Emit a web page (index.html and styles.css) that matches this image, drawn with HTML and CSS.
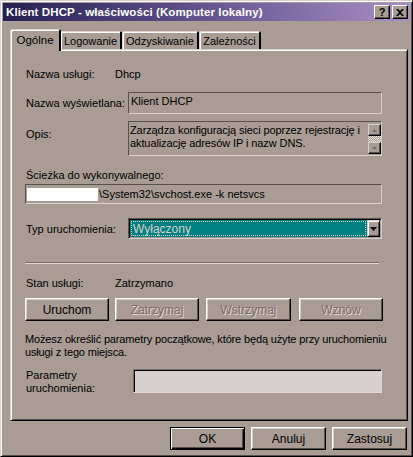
FILE: index.html
```html
<!DOCTYPE html>
<html lang="pl">
<head>
<meta charset="utf-8">
<title>Klient DHCP - właściwości</title>
<link rel="stylesheet" href="styles.css">
</head>
<body>
<div class="window">
  <div class="titlebar">
    <span class="title">Klient DHCP - właściwości (Komputer lokalny)</span>
    <div class="tbtns">
      <span class="tbtn">?</span>
      <span class="tbtn tbtn-x"><svg width="8" height="7" viewBox="0 0 8 7"><path d="M0 0h2l2 2 2-2h2L5 3.5 8 7H6L4 5 2 7H0l3-3.5z" fill="#000"/></svg></span>
    </div>
  </div>
  <div class="tabs">
    <div class="tab active">Ogólne</div>
    <div class="tab t2">Logowanie</div>
    <div class="tab t3">Odzyskiwanie</div>
    <div class="tab t4">Zależności</div>
  </div>
  <div class="panel">
    <div class="row r1">
      <span class="lbl lbl-short">Nazwa usługi:</span>
      <span>Dhcp</span>
    </div>
    <div class="row r2">
      <span class="lbl">Nazwa wyświetlana:</span>
      <div class="field ro f-name">Klient DHCP</div>
    </div>
    <div class="row r3">
      <span class="lbl lbl-top">Opis:</span>
      <div class="field ro f-desc">
        <div class="desc-text">Zarządza konfiguracją sieci poprzez rejestrację i aktualizację adresów IP i nazw DNS.</div>
        <div class="vscroll">
          <span class="sbtn"><svg width="5" height="3" viewBox="0 0 5 3"><path d="M2.5 0L5 3H0z" fill="#7a6e68"/></svg></span>
          <span class="strack"></span>
          <span class="sbtn"><svg width="5" height="3" viewBox="0 0 5 3"><path d="M0 0h5L2.5 3z" fill="#7a6e68"/></svg></span>
        </div>
      </div>
    </div>
    <div class="r4">Ścieżka do wykonywalnego:</div>
    <div class="field ro f-path"><span class="redact"></span>\System32\svchost.exe -k netsvcs</div>
    <div class="row r6">
      <span class="lbl">Typ uruchomienia:</span>
      <div class="combo">
        <div class="combo-val"><span class="sel">Wyłączony</span></div>
        <span class="cbtn"><svg width="7" height="4" viewBox="0 0 7 4"><path d="M0 0h7L3.5 4z" fill="#000"/></svg></span>
      </div>
    </div>
    <div class="sep"></div>
    <div class="row r7">
      <span class="lbl lbl-short">Stan usługi:</span>
      <span>Zatrzymano</span>
    </div>
    <div class="btnrow">
      <span class="btn">Uruchom</span>
      <span class="btn dis">Zatrzymaj</span>
      <span class="btn dis">Wstrzymaj</span>
      <span class="btn dis">Wznów</span>
    </div>
    <p class="info">Możesz określić parametry początkowe, które będą użyte przy uruchomieniu<br>usługi z tego miejsca.</p>
    <div class="row r9">
      <span class="lbl lbl-param">Parametry<br>uruchomienia:</span>
      <div class="field f-param"></div>
    </div>
  </div>
  <div class="footer">
    <span class="btn fbtn default">OK</span>
    <span class="btn fbtn">Anuluj</span>
    <span class="btn fbtn">Zastosuj</span>
  </div>
</div>
</body>
</html>
```

FILE: styles.css
```css
* { box-sizing: border-box; }
html, body { margin: 0; padding: 0; }
body {
  width: 413px;
  height: 457px;
  overflow: hidden;
  background: #a89c94;
  font-family: "Liberation Sans", Arial, sans-serif;
  font-size: 11px;
  color: #000;
}
.window {
  width: 413px;
  height: 457px;
  background: #a89c94;
  border-left: 1px solid #d8d0cc;
  border-top: 1px solid #d8d0cc;
  border-right: 1px solid #000;
  border-bottom: 1px solid #000;
  box-shadow: inset 1px 1px 0 #fff, inset -1px -1px 0 #58504c;
  padding: 2px 2px 0 2px;
  position: relative;
}
.titlebar {
  height: 18px;
  background: linear-gradient(to right, #262052 0%, #6a5a96 55%, #a890c4 100%);
  display: flex;
  align-items: center;
  justify-content: space-between;
  padding: 0 2px 0 3px;
}
.title {
  color: #fff;
  font-weight: bold;
  font-size: 11.5px;
  letter-spacing: 0.1px;
  white-space: nowrap;
}
.tbtns { display: flex; gap: 2px; }
.tbtn {
  width: 16px;
  height: 14px;
  background: #a89c94;
  border-top: 1px solid #fff;
  border-left: 1px solid #fff;
  border-right: 1px solid #000;
  border-bottom: 1px solid #000;
  box-shadow: inset -1px -1px 0 #58504c;
  display: flex;
  align-items: center;
  justify-content: center;
  font-weight: bold;
  font-size: 11px;
  line-height: 1;
}
.tabs {
  display: flex;
  margin: 7px 0 0 7px;
  height: 21px;
  align-items: flex-end;
  position: relative;
  z-index: 1;
}
.tab {
  height: 18px;
  border-top: 1px solid #d8d0cc;
  border-left: 1px solid #d8d0cc;
  border-right: 2px solid #000;
  border-radius: 2px 2px 0 0;
  display: flex;
  align-items: center;
  justify-content: center;
  box-shadow: inset 1px 1px 0 #fff;
  background: #a89c94;
  font-size: 11px;
}
.tab.active {
  width: 51px;
  height: 22px;
  margin-bottom: -2px;
  padding-bottom: 2px;
  margin-right: -1px;
  position: relative;
  z-index: 2;
  font-size: 11.5px;
}
.t2 { width: 62px; }
.t3 { width: 77px; }
.t4 { width: 62px; }
.panel {
  margin-left: 7px;
  width: 398px;
  height: 372px;
  border-top: 1px solid #d8d0cc;
  border-left: 1px solid #d8d0cc;
  border-right: 1px solid #000;
  border-bottom: 1px solid #000;
  box-shadow: inset 1px 1px 0 #fff, inset -1px -1px 0 #58504c;
  padding: 0 0 0 15px;
  display: flex;
  flex-direction: column;
}
.row { display: flex; align-items: center; }
.lbl { width: 102px; flex: none; white-space: nowrap; }
.lbl-short { width: 89px; }
.lbl-top { align-self: flex-start; padding-top: 7px; }
.r1 { margin-top: 17px; height: 13px; }
.r2 { margin-top: 12px; }
.r3 { margin-top: 7px; }
.field {
  border-top: 1px solid #58504c;
  border-left: 1px solid #58504c;
  border-right: 1px solid #d8d0cc;
  border-bottom: 1px solid #d8d0cc;
  width: 254px;
}
.f-name { height: 22px; padding: 2px 0 0 2px; }
.f-desc { height: 35px; display: flex; padding: 1px 0 0 1px; }
.desc-text { flex: 1; line-height: 13px; padding-top: 1px; letter-spacing: -0.1px; }
.vscroll { width: 13px; display: flex; flex-direction: column; margin: 1px 0 1px 0; }
.sbtn {
  height: 12px;
  background: #a89c94;
  border-top: 1px solid #d8d0cc;
  border-left: 1px solid #d8d0cc;
  border-right: 1px solid #000;
  border-bottom: 1px solid #000;
  box-shadow: inset -1px -1px 0 #58504c;
  display: flex;
  align-items: center;
  justify-content: center;
}
.strack {
  flex: 1;
  background-color: #d8d0cc;
  background-image: repeating-conic-gradient(#a89c94 0 25%, #e8e2de 0 50%);
  background-size: 2px 2px;
}
.r4 { margin-top: 13px; height: 13px; line-height: 13px; }
.f-path {
  margin-top: 2px;
  width: 357px;
  margin-left: -1px;
  height: 20px;
  display: flex;
  align-items: center;
  padding-left: 1px;
}
.redact { width: 71px; height: 13px; background: #fff; margin-right: 1px; }
.r6 { margin-top: 14px; }
.combo {
  width: 254px;
  height: 21px;
  border-top: 1px solid #58504c;
  border-left: 1px solid #58504c;
  border-right: 1px solid #d8d0cc;
  border-bottom: 1px solid #d8d0cc;
  display: flex;
  box-shadow: inset 1px 1px 0 #000, inset -1px -1px 0 #a89c94;
  padding: 1px 1px 1px 1px;
}
.combo-val {
  flex: 1;
  background: #008080;
  padding: 1px;
  display: flex;
}
.sel {
  flex: 1;
  outline: 1px dotted #d8d0cc;
  outline-offset: -1px;
  color: #d8d0cc;
  padding-left: 2px;
  display: flex;
  align-items: center;
  font-size: 12px;
}
.cbtn {
  width: 13px;
  background: #a89c94;
  border-top: 1px solid #d8d0cc;
  border-left: 1px solid #d8d0cc;
  border-right: 1px solid #000;
  border-bottom: 1px solid #000;
  box-shadow: inset 1px 1px 0 #fff, inset -1px -1px 0 #58504c;
  display: flex;
  align-items: center;
  justify-content: center;
}
.sep {
  margin-top: 23px;
  width: 354px;
  margin-left: -1px;
  height: 2px;
  border-top: 1px solid #7a6e68;
  border-bottom: 1px solid #e0d8d4;
}
.r7 { margin-top: 12px; height: 13px; }
.btnrow { display: flex; margin-top: 9px; margin-left: -1px; gap: 6px; }
.btn {
  height: 23px;
  width: 84px;
  background: #a89c94;
  border-top: 1px solid #fff;
  border-left: 1px solid #fff;
  border-right: 1px solid #000;
  border-bottom: 1px solid #000;
  box-shadow: inset -1px -1px 0 #58504c, inset 1px 1px 0 #d8d0cc;
  display: flex;
  align-items: center;
  justify-content: center;
  font-size: 12px;
}
.btnrow .btn:nth-child(3) { width: 85px; margin-left: 1px; }
.btnrow .btn:nth-child(4) { margin-left: 2px; }
.btn.dis { color: #7a6e68; text-shadow: 1px 1px 0 #e0d8d4; }
.info {
  margin: 12px 0 0 -1px;
  line-height: 13px;
  width: 370px;
  white-space: nowrap;
  letter-spacing: -0.15px;
}
.r9 { margin-top: 10px; align-items: flex-start; }
.lbl-param { width: 107px; line-height: 13px; padding-top: 0; }
.f-param {
  width: 249px;
  height: 24px;
  background: #d8d0cc;
  box-shadow: inset 1px 1px 0 #000;
  border-top: 1px solid #7a6e68;
  border-left: 1px solid #7a6e68;
  border-right: 1px solid #e0d8d4;
  border-bottom: 1px solid #e0d8d4;
}
.footer {
  display: flex;
  justify-content: flex-end;
  gap: 6px;
  margin-top: 6px;
  padding-right: 3px;
}
.fbtn { width: 75px; height: 23px; }
.fbtn.default {
  border: 1px solid #000;
  box-shadow: inset 1px 1px 0 #fff, inset -1px -1px 0 #000, inset -2px -2px 0 #58504c;
}
```
